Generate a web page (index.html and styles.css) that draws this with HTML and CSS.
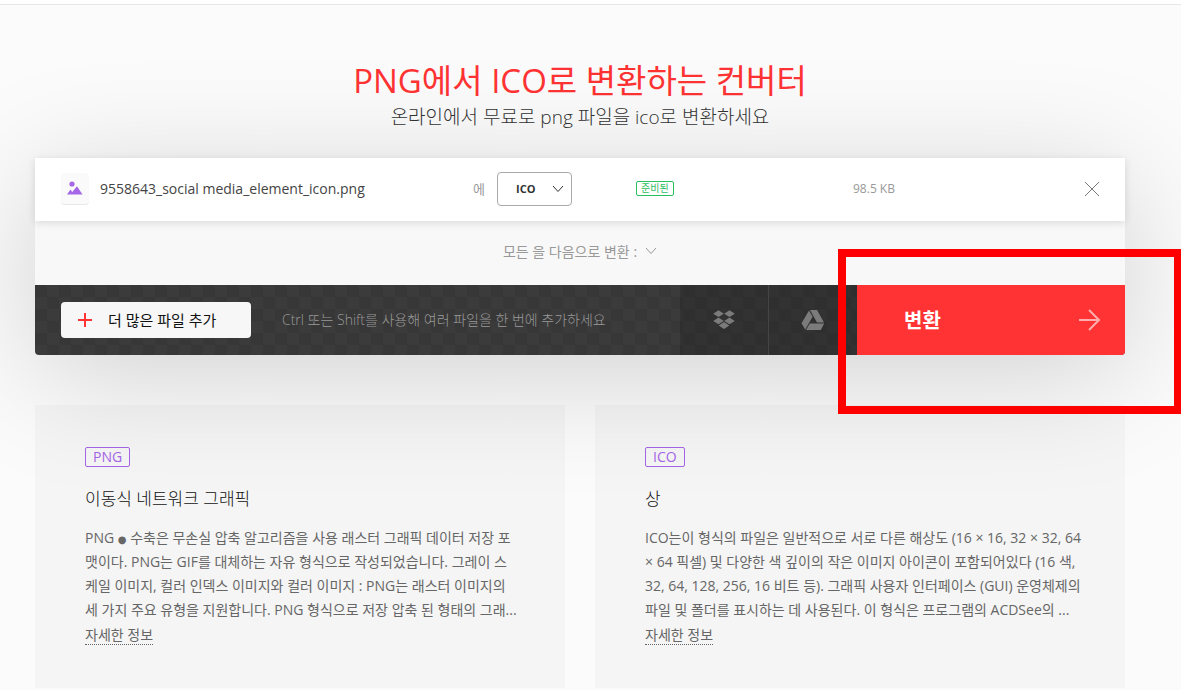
FILE: index.html
```
<!DOCTYPE html>
<html lang="ko">
<head>
  <meta charset="utf-8">
  <title>PNG ICO 변환</title>
  <link rel="stylesheet" href="styles.css">
</head>
<body>
  <header class="topbar"></header>

  <main class="page">
    <div class="heading">
      <h1>PNG에서 ICO로 변환하는 컨버터</h1>
      <h2>온라인에서 무료로 png 파일을 ico로 변환하세요</h2>
    </div>

    <section class="converter">
      <div class="file-row">
        <span class="file-icon">
          <svg width="16" height="14" viewBox="0 0 16 14"><circle cx="5" cy="3" r="2.6"/><path d="M0 13.5 3.5 8.5 5.2 11 10 5.2 15.5 13.5z"/></svg>
        </span>
        <span class="file-name">9558643_social media_element_icon.png</span>
        <label class="file-to" for="format">에</label>
        <span class="format">
          <select id="format">
            <option>ICO</option>
          </select>
          <svg width="12" height="8" viewBox="0 0 12 8"><path d="M1 1l5 5.5L11 1"/></svg>
        </span>
        <span class="file-status"><span class="status">준비된</span></span>
        <span class="file-size">98.5 KB</span>
        <button class="remove" aria-label="삭제">
          <svg width="14" height="14" viewBox="0 0 14 14"><path d="M0 0l14 14M14 0L0 14"/></svg>
        </button>
      </div>

      <button class="convert-all">
        모든 을 다음으로 변환 :
        <svg width="12" height="8" viewBox="0 0 12 8"><path d="M1 1l5 5.5L11 1"/></svg>
      </button>

      <div class="toolbar">
        <div class="add">
          <button class="add-button">
            <svg width="14" height="14" viewBox="0 0 14 14"><path d="M7 0v14M0 7h14"/></svg>
            <span>더 많은 파일 추가</span>
          </button>
          <span class="hint">Ctrl 또는 Shift를 사용해 여러 파일을 한 번에 추가하세요</span>
        </div>
        <button class="source" aria-label="Dropbox">
          <svg width="22" height="20" viewBox="0 0 22 20"><path d="M5.5.2l5.300 3.500-5.300 3.400L.2 3.700zM16.500.2l5.300 3.500-5.300 3.400-5.300-3.400zM5.500 7.500l5.300 3.400-5.300 3.400L.2 10.900zM16.500 7.500l5.300 3.400-5.300 3.400-5.300-3.400zM11 12l5.300 3.500L11 19l-5.300-3.500z"/></svg>
        </button>
        <button class="source" aria-label="Google Drive">
          <svg width="24" height="20" viewBox="0 0 24 20"><path d="M8 .5l3.600 6.200-7.400 12.800L.5 13.200zM9 0h7l7 12.500h-7zM8.800 13.500h14.400L19.800 20H5z"/></svg>
        </button>
        <div class="convert">
          <button class="convert-button">
            <span>변환</span>
            <svg width="22" height="22" viewBox="0 0 22 22"><path d="M0 11h20M10 1l10 10L10 21"/></svg>
          </button>
          <div class="highlight"></div>
        </div>
      </div>
    </section>

    <section class="formats">
      <article class="card">
        <span class="tag">PNG</span>
        <h3>이동식 네트워크 그래픽</h3>
        <p>
          PNG <span class="dot">●</span> 수축은 무손실 압축 알고리즘을 사용 래스터 그래픽 데이터 저장 포<br>
          맷이다. PNG는 GIF를 대체하는 자유 형식으로 작성되었습니다. 그레이 스<br>
          케일 이미지, 컬러 인덱스 이미지와 컬러 이미지 : PNG는 래스터 이미지의<br>
          세 가지 주요 유형을 지원합니다. PNG 형식으로 저장 압축 된 형태의 그래...
        </p>
        <a href="#">자세한 정보</a>
      </article>
      <article class="card">
        <span class="tag">ICO</span>
        <h3>상</h3>
        <p>
          ICO는이 형식의 파일은 일반적으로 서로 다른 해상도 (16 × 16, 32 × 32, 64<br>
          × 64 픽셀) 및 다양한 색 깊이의 작은 이미지 아이콘이 포함되어있다 (16 색,<br>
          32, 64, 128, 256, 16 비트 등). 그래픽 사용자 인터페이스 (GUI) 운영체제의<br>
          파일 및 폴더를 표시하는 데 사용된다. 이 형식은 프로그램의 ACDSee의 ...
        </p>
        <a href="#">자세한 정보</a>
      </article>
    </section>
  </main>
</body>
</html>
```

FILE: styles.css
```
* {
  box-sizing: border-box;
}

body {
  margin: 0;
  background-color: #fbfbfb;
  color: #333;
  font-family: "Open Sans", "Noto Sans CJK KR", sans-serif;
  font-size: 14px;
  overflow-x: hidden;
}

button, select {
  font: inherit;
  border: none;
  padding: 0;
  background: none;
  cursor: pointer;
}

svg {
  display: block;
  flex: none;
}

.topbar {
  height: 5px;
  background-color: #fff;
  border-bottom: 1px solid #e6e6e6;
}

.page {
  padding: 54px 56px 2px 35px;
}

/* Heading */
.heading {
  text-align: center;
}

h1, h2, h3, p {
  margin: 0;
}

h1 {
  color: #f33;
  font-size: 33px;
  font-weight: 400;
  line-height: 44px;
}

h2 {
  font-size: 19px;
  font-weight: 300;
  line-height: 28px;
}

/* Converter box */
.converter {
  position: relative;
  z-index: 1;
  margin-top: 27px;
  background-color: #f8f8f8;
  border-radius: 0 0 4px 4px;
  box-shadow: 0 20px 120px rgba(0, 0, 0, 0.17);
}

.file-row {
  display: grid;
  grid-template-columns: 39px 373px 24px 139px 217px 1fr 16px;
  align-items: center;
  height: 63px;
  padding: 0 25px 2px 26px;
  background-color: #fff;
  box-shadow: 0 2px 8px rgba(0, 0, 0, 0.12);
}

.file-icon {
  display: flex;
  align-items: center;
  justify-content: center;
  width: 28px;
  height: 32px;
  background-color: #fafafa;
  border-bottom: 1px solid #e8e8e8;
  border-radius: 4px;
}

.file-icon svg {
  fill: #a566e8;
}

.file-name {
  color: #444;
}

.file-to {
  color: #999;
  font-size: 13px;
}

.format {
  position: relative;
  width: 75px;
}

.format select {
  appearance: none;
  display: block;
  width: 100%;
  height: 34px;
  padding-left: 18px;
  border: 1px solid #aaa;
  border-radius: 4px;
  color: #333;
  font-size: 11px;
  font-weight: 700;
}

.format svg {
  position: absolute;
  right: 8px;
  top: 13px;
  pointer-events: none;
}

.format svg, .convert-all svg, .remove svg, .add-button svg, .convert-button svg {
  fill: none;
  stroke: currentColor;
}

.file-status {
  display: flex;
}

.status {
  padding: 0 4px;
  border: 1px solid #2dbe60;
  border-radius: 2px;
  color: #2dbe60;
  font-size: 10px;
  line-height: 13px;
}

.file-size {
  color: #999;
  font-size: 12px;
}

.remove {
  display: flex;
  justify-content: center;
  color: #777;
}

.convert-all {
  display: flex;
  align-items: center;
  justify-content: center;
  gap: 8px;
  width: 100%;
  height: 64px;
  padding-bottom: 4px;
  color: #999;
}

/* Dark toolbar */
.toolbar {
  display: flex;
  height: 70px;
  border-radius: 0 0 4px 4px;
  background: repeating-conic-gradient(#3b3b3b 0 25%, #373737 0 50%) 0 0 / 24px 24px;
}

.add {
  display: flex;
  flex: 1;
  align-items: center;
  gap: 31px;
  padding-left: 26px;
}

.add-button {
  display: flex;
  align-items: center;
  gap: 16px;
  width: 190px;
  height: 36px;
  padding-left: 17px;
  background-color: #f7f7f7;
  border-radius: 4px;
  color: #111;
  font-size: 15px;
}

.add-button span, .convert-button span {
  padding-bottom: 2px;
}

.add-button svg {
  stroke: #f33;
  stroke-width: 2;
}

.hint {
  padding-bottom: 2px;
  color: #999;
  font-weight: 300;
}

.source {
  display: flex;
  align-items: center;
  justify-content: center;
  width: 88px;
  background-color: rgba(0, 0, 0, 0.14);
}

.source + .source {
  width: 89px;
  border-left: 1px solid #454545;
}

.source svg {
  fill: #7b7b7b;
}

.convert {
  position: relative;
  width: 268px;
}

.convert-button {
  display: flex;
  align-items: center;
  justify-content: space-between;
  width: 100%;
  height: 100%;
  padding: 0 24px 0 47px;
  background-color: #f33;
  border-radius: 0 0 4px 0;
  color: #fff;
  font-size: 20px;
  font-weight: 700;
}

.convert-button svg {
  opacity: 0.6;
  stroke-width: 2;
}

.highlight {
  position: absolute;
  inset: -36px -57px -59px -19px;
  border: 8px solid #f00;
  pointer-events: none;
}

/* Format descriptions */
.formats {
  display: grid;
  grid-template-columns: 1fr 1fr;
  gap: 30px;
  margin-top: 50px;
}

.card {
  min-width: 0;
  height: 283px;
  padding: 42px 50px 0;
  background-color: #f5f5f5;
}

.tag {
  display: inline-block;
  padding: 0 7px;
  border: 1px solid #a566e8;
  border-radius: 2px;
  color: #a566e8;
  line-height: 18px;
}

.card h3 {
  margin-top: 20px;
  color: #111;
  font-size: 17px;
  font-weight: 300;
  line-height: 24px;
}

.card p {
  margin-top: 15px;
  color: #666;
  line-height: 24px;
  white-space: nowrap;
}

.dot {
  font-family: "DejaVu Sans", sans-serif;
  font-size: 10px;
  line-height: 10px;
}

.card a {
  display: inline-block;
  margin-top: 4px;
  border-bottom: 1px dotted #666;
  color: #666;
  line-height: 18px;
  text-decoration: none;
}
```
